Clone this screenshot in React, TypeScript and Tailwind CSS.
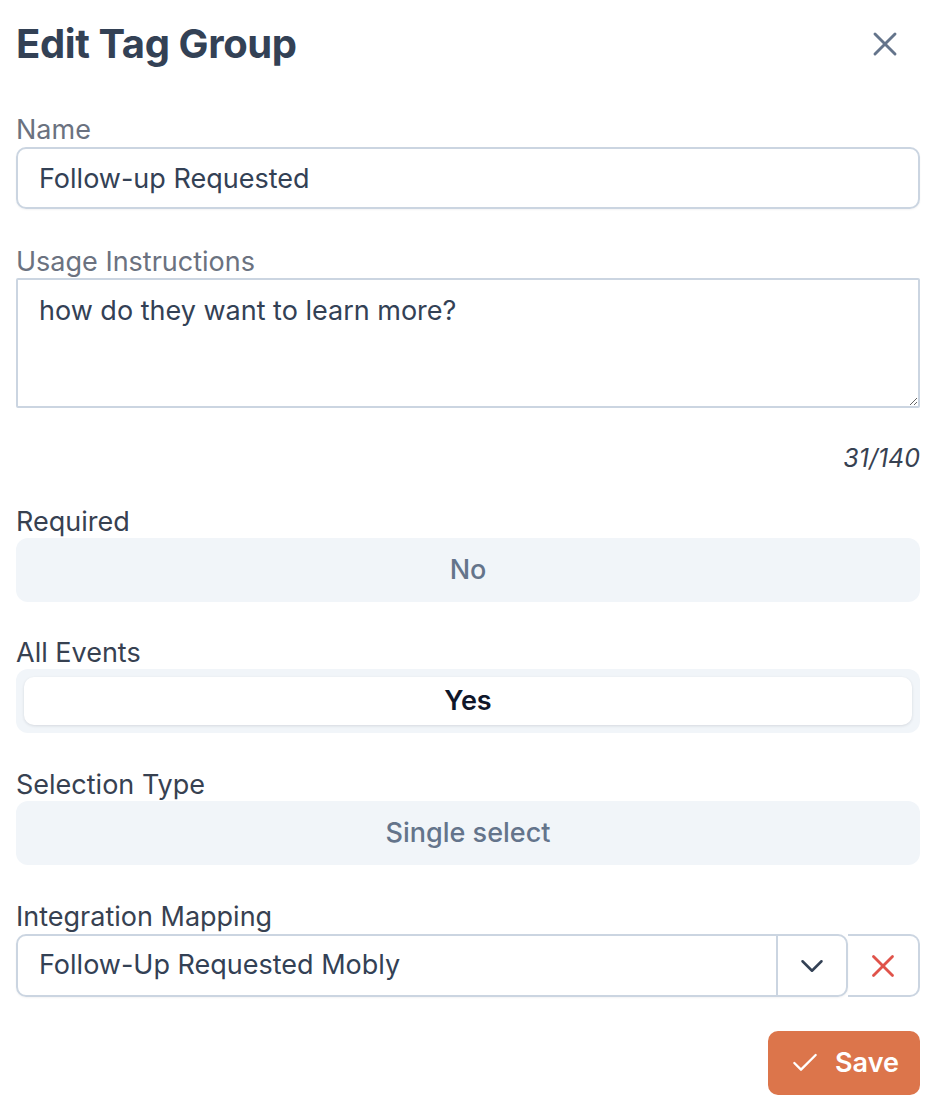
import { Check, ChevronDown, X } from "lucide-react";

const Label = ({ children, muted }: { children: React.ReactNode; muted?: boolean }) => (
    <div className={`text-[27px] leading-[32px] ${muted ? "text-[#6b7280]" : "text-[#374151]"}`}>{children}</div>
);

const Toggle = ({ value, active }: { value: string; active?: boolean }) => (
    <div className="h-[64px] rounded-[12px] bg-[#f1f5f9] p-[8px]">
        {active ? (
            <div className="h-full rounded-[10px] bg-white shadow-[0_1px_3px_rgba(15,23,42,0.12)] flex items-center justify-center text-[27px] font-semibold text-[#0f172a]">
                {value}
            </div>
        ) : (
            <div className="h-full flex items-center justify-center text-[27px] font-medium text-[#64748b]">{value}</div>
        )}
    </div>
);

export default function App() {
    return (
        <div className="bg-white min-h-screen pl-4 pr-[22px] font-['Inter',sans-serif]">
            <div className="h-[88px] flex items-center justify-between">
                <h1 className="text-[40px] font-bold text-[#334155] tracking-[-0.4px]">Edit Tag Group</h1>
                <button className="mr-[15px] text-[#64748b]">
                    <X size={40} strokeWidth={1.75} />
                </button>
            </div>

            <div className="mt-[26px]">
                <Label muted>Name</Label>
                <input
                    defaultValue="Follow-up Requested"
                    className="mt-px w-full h-[62px] rounded-[10px] border-2 border-[#cbd5e1] pl-[21px] text-[27px] text-[#334155] outline-none shadow-[0_1px_2px_rgba(15,23,42,0.05)]"
                />
            </div>

            <div className="mt-[37px]">
                <Label muted>Usage Instructions</Label>
                <textarea
                    defaultValue="how do they want to learn more?"
                    className="block w-full h-[130px] rounded-[2px] border-2 border-[#cbd5e1] pl-[21px] pt-[15px] text-[27px] leading-[32px] text-[#334155] outline-none"
                />
            </div>

            <div className="mt-[34px] text-right text-[25px] leading-[32px] italic text-[#374151]">31/140</div>

            <div className="mt-[32px]">
                <Label>Required</Label>
                <Toggle value="No" />
            </div>

            <div className="mt-[35px]">
                <Label>All Events</Label>
                <Toggle value="Yes" active />
            </div>

            <div className="mt-[36px]">
                <Label>Selection Type</Label>
                <Toggle value="Single select" />
            </div>

            <div className="mt-[36px]">
                <Label>Integration Mapping</Label>
                <div className="mt-px flex h-[63px]">
                    <div className="flex-1 flex rounded-[10px] border-2 border-[#cbd5e1] shadow-[0_1px_2px_rgba(15,23,42,0.05)]">
                        <div className="flex-1 flex items-center pl-[21px] text-[27px] text-[#334155]">
                            Follow-Up Requested Mobly
                        </div>
                        <div className="w-[70px] border-l-2 border-[#cbd5e1] flex items-center justify-center text-[#334155]">
                            <ChevronDown size={38} strokeWidth={1.6} />
                        </div>
                    </div>
                    <div className="w-[72px] rounded-r-[10px] border-2 border-l-0 border-[#cbd5e1] flex items-center justify-center text-[#e0534a]">
                        <X size={38} strokeWidth={1.75} />
                    </div>
                </div>
            </div>

            <div className="mt-[34px] flex justify-end">
                <button className="h-[64px] w-[152px] rounded-[10px] bg-[#dc754b] text-white flex items-center justify-center gap-[14px] text-[27px] font-semibold">
                    <Check size={32} strokeWidth={1.75} />
                    Save
                </button>
            </div>
        </div>
    );
}
